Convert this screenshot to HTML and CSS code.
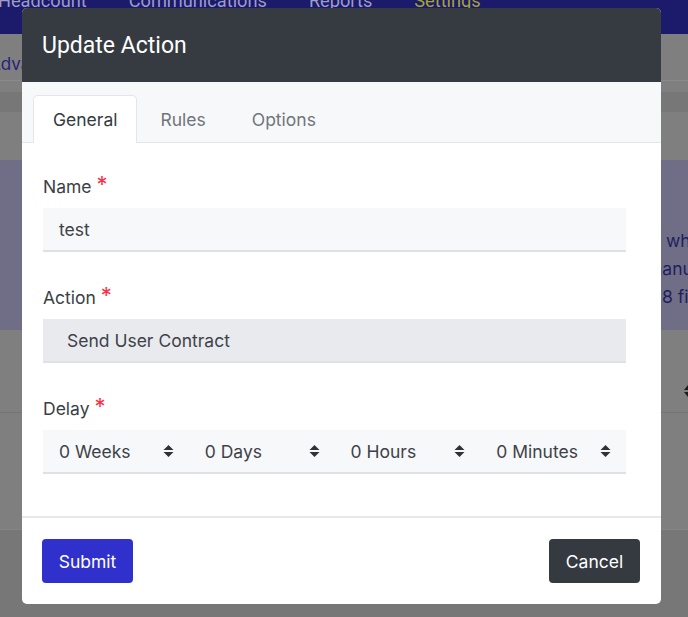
FILE: index.html
```html
<!DOCTYPE html>
<html>
<head>
	<title>Update Action</title>
	<meta charset="utf-8" />
	<link rel="stylesheet" href="styles.css">
</head>
<body>
	<div class="page">
		<div class="topnav">
			<span>Headcount</span>
			<span>Communications</span>
			<span>Reports</span>
			<span class="current">Settings</span>
		</div>
		<div class="subnav">
			<span class="crumb">Advanced</span>
		</div>
		<div class="main">
			<div class="card-head"></div>
			<div class="notice">
				<p class="l1">which</p>
				<p class="l2">manual</p>
				<p class="l3">18 files</p>
			</div>
			<div class="filter-row">
				<svg class="sort" viewBox="0 0 10 14"><path d="M1 6h8L5 1z M1 8h8l-4 5z"/></svg>
			</div>
		</div>
		<div class="bottom"></div>
	</div>

	<div class="modal">
		<div class="modal-header">
			<h2>Update Action</h2>
		</div>
		<ul class="tabs">
			<li class="active">General</li>
			<li>Rules</li>
			<li>Options</li>
		</ul>
		<div class="modal-body">
			<div class="group">
				<label>Name <span class="req">*</span></label>
				<div class="input">test</div>
			</div>
			<div class="group">
				<label>Action <span class="req">*</span></label>
				<div class="input select-big">Send User Contract</div>
			</div>
			<div class="group">
				<label>Delay <span class="req">*</span></label>
				<div class="delay">
					<div class="dsel"><span>0 Weeks</span><svg class="arrows" viewBox="0 0 10 14"><path d="M0 6h10L5 1z M0 8h10l-5 5z"/></svg></div>
					<div class="dsel"><span>0 Days</span><svg class="arrows" viewBox="0 0 10 14"><path d="M0 6h10L5 1z M0 8h10l-5 5z"/></svg></div>
					<div class="dsel"><span>0 Hours</span><svg class="arrows" viewBox="0 0 10 14"><path d="M0 6h10L5 1z M0 8h10l-5 5z"/></svg></div>
					<div class="dsel"><span>0 Minutes</span><svg class="arrows" viewBox="0 0 10 14"><path d="M0 6h10L5 1z M0 8h10l-5 5z"/></svg></div>
				</div>
			</div>
		</div>
		<div class="modal-footer">
			<button class="btn submit">Submit</button>
			<button class="btn cancel">Cancel</button>
		</div>
	</div>
</body>
</html>
```

FILE: styles.css
```css
*{
	padding: 0;
	margin: 0;
	box-sizing: border-box;
}
body{
	width: 688px;
	height: 617px;
	overflow: hidden;
	background: #7f7f7f;
	font-family: "Inter", "Liberation Sans", sans-serif;
	color: #3a3f45;
	position: relative;
}
/* page behind the dialog */
.topnav{
	height: 34px;
	background: #1b1a6b;
	display: flex;
	gap: 42px;
	margin-left: -2px;
	overflow: hidden;
	font-family: "Roboto", sans-serif;
	font-size: 18.2px;
	line-height: 20px;
	color: #9d9cc6;
}
.topnav span{
	margin-top: -9px;
}
.topnav .current{
	color: #a6a52b;
}
.subnav{
	height: 47px;
	border-bottom: 1px solid #8a8a8a;
	padding-top: 18px;
	overflow: hidden;
}
.crumb{
	display: block;
	margin-left: -11px;
	font-size: 17px;
	line-height: 24px;
	color: #25237c;
}
.main{
	height: 449px;
	border-bottom: 1px solid #858585;
	padding-top: 11px;
}
.card-head{
	height: 20px;
	background: #777777;
}
.notice{
	margin-top: 48px;
	height: 170px;
	background: #6f6e86;
	padding-top: 67px;
	font-size: 17.5px;
	line-height: 28px;
	color: #1f1e5e;
	white-space: nowrap;
	overflow: hidden;
}
.notice .l1{ padding-left: 666px; }
.notice .l2{ padding-left: 647px; }
.notice .l3{ padding-left: 655px; }
.filter-row{
	margin-top: 40px;
	height: 43px;
	border-bottom: 1px solid #757575;
	display: flex;
	justify-content: flex-end;
	align-items: center;
}
.sort{
	width: 10px;
	height: 14px;
	margin-right: -5px;
	fill: #1c1c1c;
}
.bottom{
	height: 100px;
	background: #777777;
}

/* dialog */
.modal{
	position: absolute;
	left: 22px;
	top: 8px;
	width: 639px;
	background: #fff;
	border-radius: 5px;
	overflow: hidden;
}
.modal-header{
	height: 74px;
	background: #363a41;
	display: flex;
	align-items: center;
	padding: 0 20px;
}
.modal-header h2{
	font-family: "Roboto", "Liberation Sans", sans-serif;
	font-weight: 400;
	font-size: 23px;
	color: #fff;
}
.tabs{
	list-style: none;
	display: flex;
	background: #f7f8fa;
	padding: 13px 11px 0;
	border-bottom: 1px solid #e4e6ea;
}
.tabs li{
	height: 47px;
	line-height: 48px;
	padding: 0 22px;
	font-size: 17.5px;
	color: #70757b;
	border: 1px solid transparent;
	border-bottom: 0;
	margin-bottom: -1px;
}
.tabs .active{
	background: #fff;
	color: #343a40;
	border-color: #e4e6ea;
	border-radius: 5px 5px 0 0;
	height: 48px;
	padding: 0 19px;
}
.modal-body{
	padding: 32px 35px 8px 21px;
	border-bottom: 2px solid #e6e8ec;
}
.group{
	margin-bottom: 34px;
}
.group label{
	display: block;
	font-size: 17.5px;
	line-height: 24px;
	margin-bottom: 9px;
	color: #3a3f45;
}
.req{
	color: #ff2b44;
	font-size: 22px;
	line-height: 10px;
	vertical-align: 1px;
}
.input{
	height: 44px;
	background: #f7f8fa;
	border-bottom: 2px solid #dfe1e6;
	padding-left: 16px;
	font-size: 17.5px;
	line-height: 43px;
	color: #3d4249;
}
.select-big{
	background: #e9eaee;
	padding-left: 24px;
}
.delay{
	height: 44px;
	background: #f7f8fa;
	border-bottom: 2px solid #dfe1e6;
	display: flex;
}
.dsel{
	flex: 1;
	display: flex;
	justify-content: space-between;
	align-items: center;
	padding: 0 15px 0 16px;
	font-size: 17.5px;
	color: #3d4249;
}
.arrows{
	width: 11px;
	height: 14px;
	fill: #2f3337;
}
.modal-footer{
	height: 86px;
	display: flex;
	justify-content: space-between;
	align-items: center;
	padding: 0 21px 0 20px;
}
.btn{
	width: 91px;
	height: 44px;
	border: 0;
	border-radius: 4px;
	font-family: "Inter", "Liberation Sans", sans-serif;
	font-size: 17.5px;
	color: #fff;
}
.submit{
	background: #3030cc;
}
.cancel{
	background: #343a40;
}
```
